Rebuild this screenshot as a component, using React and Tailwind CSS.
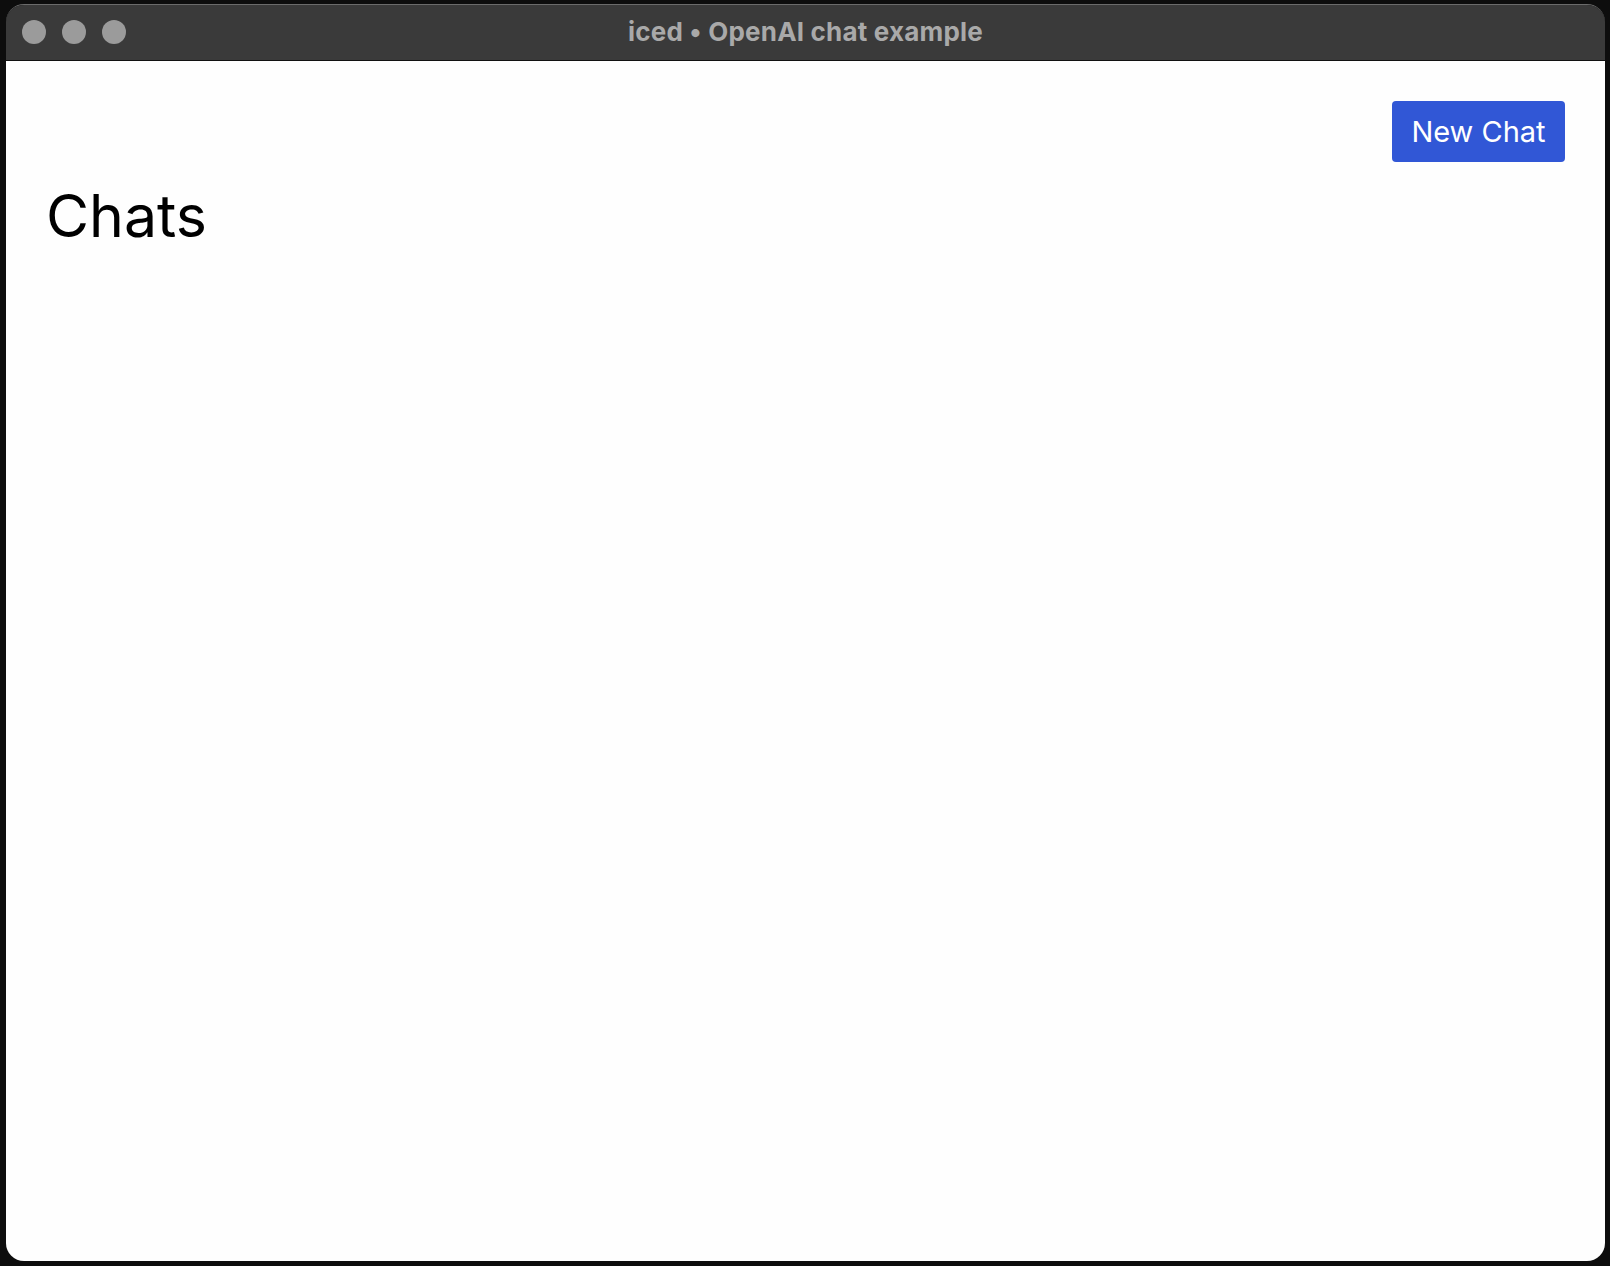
import React from "react";

export default function App() {
  return (
    <div className="h-[1266px] w-[1610px] bg-[#0d0d0d] pb-[5px] pl-[6px] pr-[5px] pt-[4px]">
      <div className="flex h-full w-full flex-col overflow-hidden rounded-[18px] border-t border-[#6b6b6b]">
        {/* title bar */}
        <div className="relative flex h-[56px] shrink-0 items-center justify-center border-b border-[#111] bg-[#3a3a3a] pb-[3px]">
          <div className="absolute left-[16px] top-[15px] flex gap-[16px]">
            <span className="h-[24px] w-[24px] rounded-full bg-[#9b9b9b]" />
            <span className="h-[24px] w-[24px] rounded-full bg-[#9b9b9b]" />
            <span className="h-[24px] w-[24px] rounded-full bg-[#9b9b9b]" />
          </div>
          <span className="font-['Inter','Liberation_Sans',sans-serif] text-[26px] font-bold tracking-[0.2px] text-[#a9a9a9]">
            iced • OpenAI chat example
          </span>
        </div>

        {/* content */}
        <div className="flex flex-1 flex-col bg-[#fefefe] p-[40px] font-['Inter','Liberation_Sans',sans-serif]">
          <div className="flex justify-end">
            <button className="h-[61px] w-[173px] rounded-[4px] bg-[#3157d6] text-[29px] leading-none text-white">
              New Chat
            </button>
          </div>
          <h1 className="mt-[16px] text-[59px] leading-[1.3] text-black">Chats</h1>
        </div>
      </div>
    </div>
  );
}
